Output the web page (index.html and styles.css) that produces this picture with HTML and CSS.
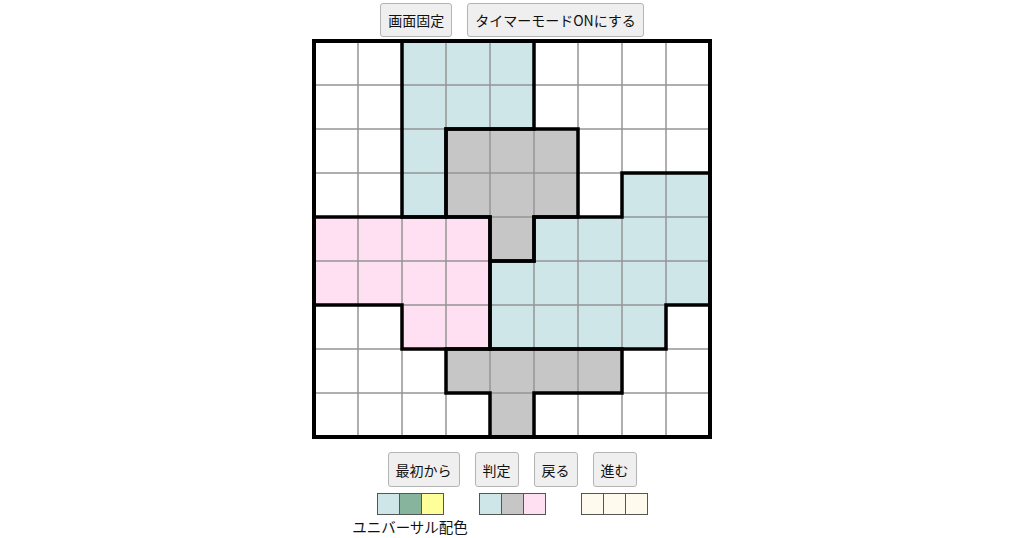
FILE: index.html
```html
<!DOCTYPE html>
<html lang="ja">
<head>
<meta charset="utf-8">
<title>パズル</title>
<link rel="stylesheet" href="styles.css">
</head>
<body>
<div class="page">
  <div class="toolbar top-bar">
    <button class="btn">画面固定</button>
    <button class="btn">タイマーモードONにする</button>
  </div>

  <div class="board">
    <svg class="board-svg" width="400" height="400" viewBox="0 0 400 400">
      <rect class="cell-white" x="2" y="2" width="396" height="396"/>
      <!-- blue -->
      <rect class="cell-blue" x="90" y="2" width="132" height="88"/>
      <rect class="cell-blue" x="90" y="90" width="44" height="88"/>
      <rect class="cell-blue" x="310" y="134" width="88" height="44"/>
      <rect class="cell-blue" x="222" y="178" width="176" height="44"/>
      <rect class="cell-blue" x="178" y="222" width="220" height="44"/>
      <rect class="cell-blue" x="178" y="266" width="176" height="44"/>
      <!-- gray -->
      <rect class="cell-gray" x="134" y="90" width="132" height="88"/>
      <rect class="cell-gray" x="178" y="178" width="44" height="44"/>
      <rect class="cell-gray" x="134" y="310" width="176" height="44"/>
      <rect class="cell-gray" x="178" y="354" width="44" height="44"/>
      <!-- pink -->
      <rect class="cell-pink" x="2" y="178" width="176" height="88"/>
      <rect class="cell-pink" x="90" y="266" width="88" height="44"/>
      <!-- thin grid -->
      <path class="grid-thin" d="M46 2V398M90 2V398M134 2V398M178 2V398M222 2V398M266 2V398M310 2V398M354 2V398M2 46H398M2 90H398M2 134H398M2 178H398M2 222H398M2 266H398M2 310H398M2 354H398"/>
      <!-- region outlines -->
      <path class="grid-thick" d="M90 2H222V90H134V178H90Z"/>
      <path class="grid-thick" d="M134 90H266V178H222V222H178V178H134Z"/>
      <path class="grid-thick" d="M310 134H398V266H354V310H178V222H222V178H310Z"/>
      <path class="grid-thick" d="M2 178H178V310H90V266H2Z"/>
      <path class="grid-thick" d="M134 310H310V354H222V398H178V354H134Z"/>
      <rect class="grid-outer" x="2" y="2" width="396" height="396"/>
    </svg>
  </div>

  <div class="toolbar controls">
    <button class="btn btn-tall">最初から</button>
    <button class="btn btn-tall">判定</button>
    <button class="btn btn-tall">戻る</button>
    <button class="btn btn-tall">進む</button>
  </div>

  <div class="palettes">
    <div class="palette-group">
      <div class="palette">
        <span class="swatch sw-lightblue"></span>
        <span class="swatch sw-green"></span>
        <span class="swatch sw-yellow"></span>
      </div>
      <div class="palette-label">ユニバーサル配色</div>
    </div>
    <div class="palette-group">
      <div class="palette">
        <span class="swatch sw-lightblue"></span>
        <span class="swatch sw-gray"></span>
        <span class="swatch sw-pink"></span>
      </div>
    </div>
    <div class="palette-group">
      <div class="palette">
        <span class="swatch sw-cream"></span>
        <span class="swatch sw-cream"></span>
        <span class="swatch sw-cream"></span>
      </div>
    </div>
  </div>
</div>
</body>
</html>
```

FILE: styles.css
```css
* { box-sizing: border-box; }

html, body {
  margin: 0;
  padding: 0;
  background: #ffffff;
}

body {
  font-family: "Noto Sans CJK JP", "Noto Sans", sans-serif;
  color: #111;
}

.page {
  display: flex;
  flex-direction: column;
  align-items: center;
  width: 1024px;
}

.toolbar {
  display: flex;
  gap: 15px;
}

.top-bar {
  margin-top: 3px;
}

.btn {
  font-family: "Noto Sans CJK JP", "Noto Sans", sans-serif;
  font-size: 14px;
  height: 34px;
  padding: 0 7px;
  background: #efefef;
  border: 1px solid #b4b4b4;
  border-radius: 3px;
  color: #111;
  line-height: 1;
}

.btn-tall {
  height: 35px;
}

.board {
  margin-top: 2px;
}

.board-svg {
  display: block;
}

.cell-white { fill: #ffffff; }
.cell-blue { fill: #cfe6e8; }
.cell-gray { fill: #c6c6c6; }
.cell-pink { fill: #ffdff2; }

.grid-thin {
  fill: none;
  stroke: #959595;
  stroke-width: 1.5;
}

.grid-thick {
  fill: none;
  stroke: #000;
  stroke-width: 3.5;
  stroke-linejoin: miter;
  stroke-linecap: square;
}

.grid-outer {
  fill: none;
  stroke: #000;
  stroke-width: 4;
}

.controls {
  margin-top: 13px;
}

.palettes {
  margin-top: 6px;
  display: grid;
  grid-template-columns: 102px 102px 102px;
}

.palette-group {
  display: flex;
  flex-direction: column;
  align-items: center;
}

.palette {
  display: flex;
}

.swatch {
  display: block;
  width: 23px;
  height: 22px;
  border: 1px solid #555;
}

.swatch + .swatch {
  margin-left: -1px;
}

.sw-lightblue { background: #cfe6e8; }
.sw-green { background: #86b49c; }
.sw-yellow { background: #ffff99; }
.sw-gray { background: #c6c6c6; }
.sw-pink { background: #ffdff2; }
.sw-cream { background: #fffaee; }

.palette-label {
  font-size: 14.5px;
  line-height: 20px;
  margin-top: 2px;
  white-space: nowrap;
  color: #111;
}
```
